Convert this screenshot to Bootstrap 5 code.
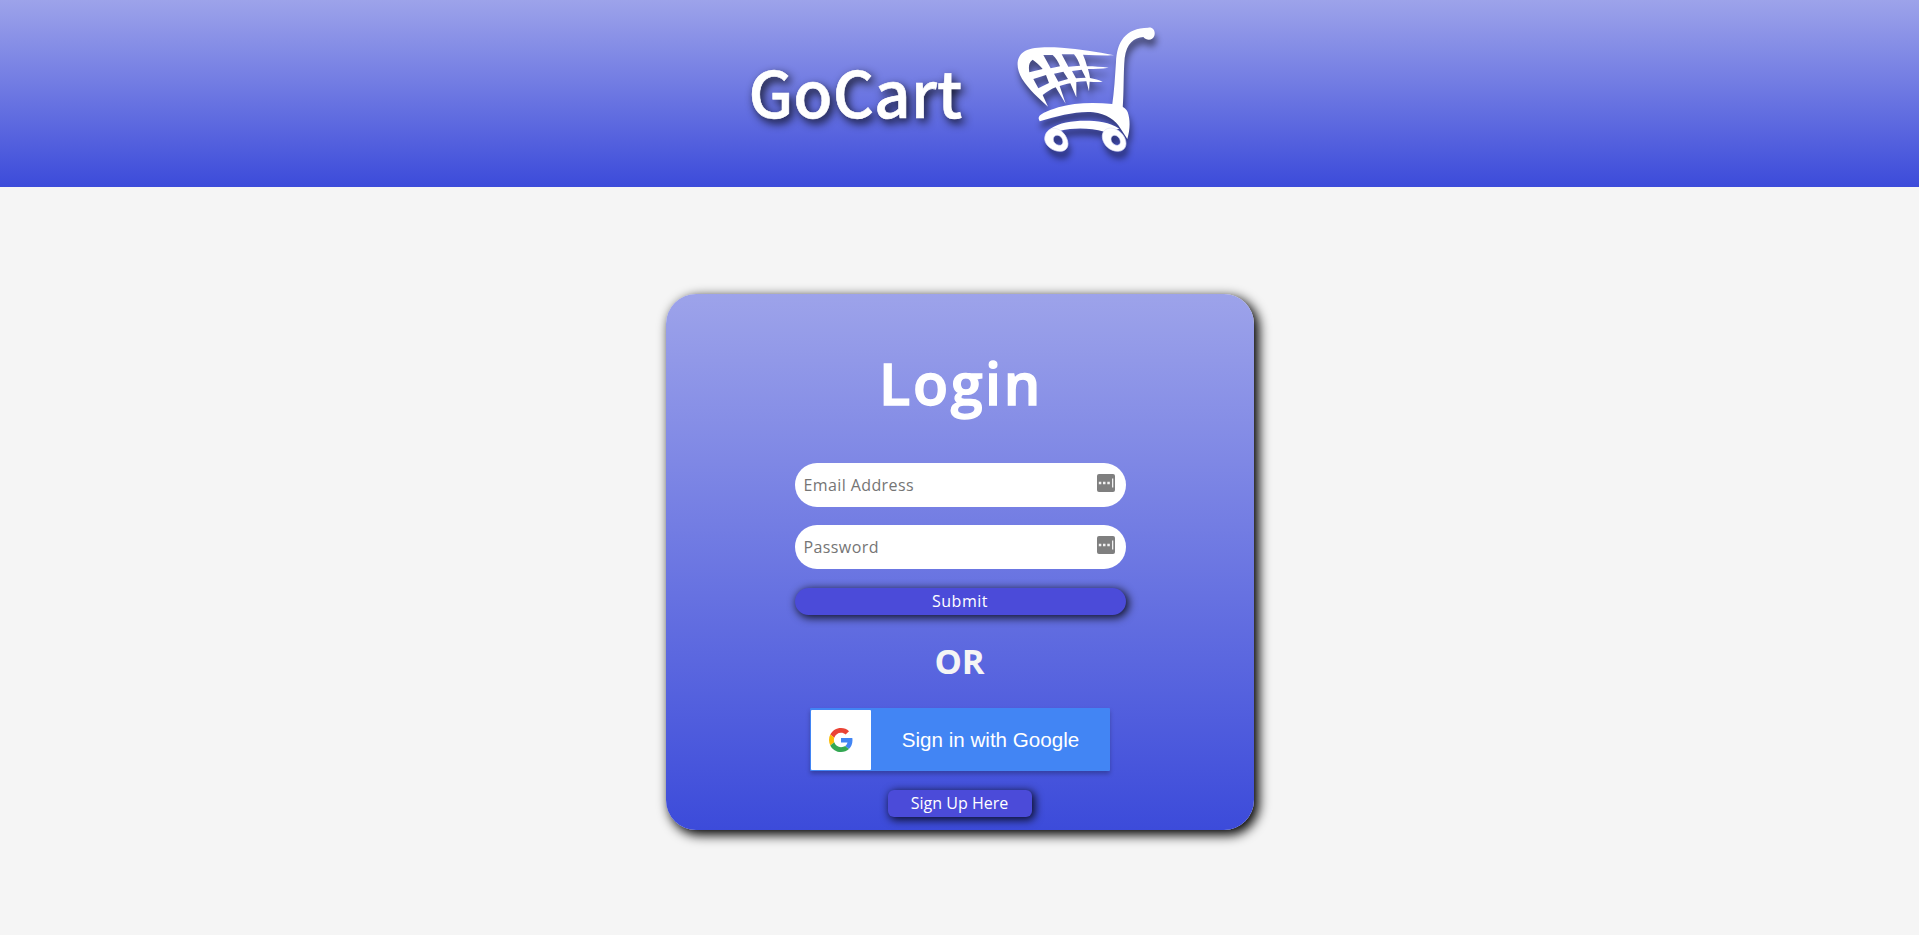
<!DOCTYPE html>
<html lang="en">
<head>
    <meta charset="UTF-8" />
    <meta name="viewport" content="width=device-width, initial-scale=1" />
    <title>GoCart</title>
    <link href="https://cdn.jsdelivr.net/npm/bootstrap@5.3.0/dist/css/bootstrap.min.css" rel="stylesheet" />

    <style>
    body {
        background-color: #f5f5f5;
        font-family: "Open Sans", "Noto Sans", sans-serif;
    }

    .site-header {
        height: 187px;
        background: linear-gradient(#9da3ea, #3c4bda);
    }

    .brand-name {
        font-family: "Noto Sans CJK JP", sans-serif;
        font-size: 64px;
        font-weight: 500;
        line-height: 1;
        text-shadow: 3px 4px 10px rgba(0, 0, 0, 0.9);
        -webkit-text-stroke: 0.6px #fff;
        margin: 0 56px 8px 8px;
        width: 210px;
        white-space: nowrap;
    }

    .brand-cart {
        width: 142px;
        height: 128px;
        overflow: visible;
        margin: 26px 22px 0 0;
        filter: drop-shadow(2px 7px 3px rgba(0, 0, 0, 0.45));
    }

    .login-card {
        width: 588px;
        height: 536px;
        margin-top: 107px;
        padding-top: 50px;
        border-radius: 30px;
        background: linear-gradient(#9da3ea, #3c4bda);
        box-shadow: 4px 4px 12px 1px #000;
    }

    .login-title {
        font-size: 57.5px;
        font-weight: 600;
        line-height: 78px;
        letter-spacing: 2.6px;
        -webkit-text-stroke: 1.4px #fff;
        margin: 0 0 41px 3px;
    }

    .login-form {
        width: 331px;
        margin-left: 1px;
    }

    .login-form .form-control {
        height: 44px;
        padding: 0 40px 1px 9px;
        border: 0;
        border-radius: 22px;
        font-size: 16px;
        letter-spacing: 0.4px;
    }

    .login-form .form-control::placeholder {
        color: #757575;
    }

    .field-gap {
        margin-bottom: 18px;
    }

    .field-icon {
        width: 18px;
        height: 18px;
        top: 11px;
        right: 11px;
    }

    .btn-go {
        height: 27px;
        padding: 0;
        border: 0;
        border-radius: 14px;
        background-color: #4b4bd9;
        color: #fff;
        font-size: 16px;
        font-weight: 500;
        line-height: 27px;
        letter-spacing: 0.2px;
        box-shadow: 2px 2px 8px 1px rgba(0, 0, 0, 0.8);
    }

    .btn-submit {
        margin-top: 1px;
        letter-spacing: 0.5px;
    }

    .btn-signup {
        width: 144px;
        border-radius: 6px;
        margin-top: 19px;
        letter-spacing: 0;
    }

    .or-text {
        color: #f5f5f5;
        font-size: 34.5px;
        font-weight: 700;
        line-height: 48px;
        margin: 22px 0 23px;
    }

    .google-btn {
        width: 300px;
        height: 63px;
        padding: 1px;
        border: 0;
        border-radius: 1px;
        background-color: #4285f4;
        box-shadow: 0 3px 4px rgba(0, 0, 0, 0.25);
        font-family: "Liberation Sans", sans-serif;
        font-size: 20.6px;
    }

    .google-label {
        padding: 2px 0 0 2px;
    }

    .google-logo {
        width: 60px;
        height: 60px;
        border-radius: 1px;
    }
    </style>
</head>
<body class="min-vh-100">
    <header class="site-header d-flex justify-content-center align-items-start text-white">
        <h1 class="brand-name align-self-center">GoCart</h1>
        <svg class="brand-cart" viewBox="45 49 426 384" fill="#fff">
            <!-- handle -->
            <path d="M336 290 C343 245 345 200 348 157 C351 97 375 55 445 54 C460 52 467 65 463 78 C458 93 440 94 430 82 C402 84 380 101 374 145 C370 190 372 245 368 296 Z" />
            <!-- basket -->
            <path fill-rule="evenodd" d="M144 291 C116 265 87 240 66 207 C47 175 47 140 75 124 C99 111 140 112 185 114 C240 118 290 126 342 137 C310 138 280 136 249 135 C255 148 258 159 261 170 C282 170 304 172 326 174 C304 177 283 178 264 178 C267 188 269 197 270 205 C284 208 297 211 308 216 C295 218 282 217 269 216 L267 245 L259 215 C248 215 238 216 229 217 L229 263 L211 221 C199 223 188 226 179 229 L197 282 L167 233 C152 239 140 247 128 256 Z
                M88 188 C85 170 87 157 98 150 C108 157 120 168 128 178 Z
                M130 136 L158 136 C167 144 175 157 180 170 L152 176 Z
                M185 134 L222 134 C230 143 236 156 240 168 L205 171 Z
                M100 208 L138 196 L147 220 L115 236 Z
                M162 192 L190 186 L204 208 L175 216 Z
                M216 184 L245 180 L257 204 L228 206 Z" />
            <!-- base -->
            <path d="M116 327 C114 314 140 305 175 293 C220 279 280 277 337 283 C357 285 375 290 383 307 C391 330 391 358 382 388 L361 356 C347 331 318 313 280 308 C230 304 175 319 119 335 Z" />
            <path d="M151 357 C178 339 215 333 255 333 C290 333 330 337 358 357 L313 366 C270 354 220 354 181 363 Z" />
            <!-- wheels -->
            <path fill-rule="evenodd" stroke="#dfe1f8" stroke-width="2" d="M134 389 C134 370 146 356 163 356 C184 357 203 380 204 402 C204 417 194 425 180 425 C156 425 136 407 134 389 Z M160 387 C158 397 170 408 181 407 C193 404 190 386 179 379 C170 374 161 378 160 387 Z" />
            <path fill-rule="evenodd" stroke="#dfe1f8" stroke-width="2" d="M307 384 C305 367 316 355 333 355 C357 356 378 380 378 401 C378 417 367 425 353 425 C330 425 309 405 307 384 Z M333 387 C332 397 343 408 353 407 C366 404 362 386 351 379 C343 374 334 378 333 387 Z" />
        </svg>
    </header>

    <main class="login-card d-flex flex-column align-items-center mx-auto text-white">
        <h2 class="login-title">Login</h2>

        <form class="login-form d-flex flex-column" novalidate>
            <div class="field-gap position-relative">
                <input type="email" class="form-control" placeholder="Email Address" aria-label="Email Address" />
                <svg class="field-icon position-absolute" viewBox="0 0 18 18">
                    <rect width="18" height="18" rx="2" fill="#7f7f7f" />
                    <path d="M1.8 7.8h2.5v2.5H1.8zM6 7.8h2.5v2.5H6zM10.3 7.8h2.5v2.5h-2.5zM15 4.5h1.3v9H15z" fill="#fff" fill-opacity=".9" />
                </svg>
            </div>
            <div class="field-gap position-relative">
                <input type="password" class="form-control" placeholder="Password" aria-label="Password" />
                <svg class="field-icon position-absolute" viewBox="0 0 18 18">
                    <rect width="18" height="18" rx="2" fill="#7f7f7f" />
                    <path d="M1.8 7.8h2.5v2.5H1.8zM6 7.8h2.5v2.5H6zM10.3 7.8h2.5v2.5h-2.5zM15 4.5h1.3v9H15z" fill="#fff" fill-opacity=".9" />
                </svg>
            </div>
            <button type="submit" class="btn btn-go btn-submit">Submit</button>
        </form>

        <h3 class="or-text">OR</h3>

        <button type="button" class="google-btn d-flex align-items-center text-white">
            <span class="google-logo bg-white d-flex align-items-center justify-content-center">
                <svg width="24" height="24" viewBox="0 0 48 48">
                    <path fill="#EA4335" d="M24 9.5c3.54 0 6.71 1.22 9.21 3.6l6.85-6.85C35.9 2.38 30.47 0 24 0 14.62 0 6.51 5.38 2.56 13.22l7.98 6.19C12.43 13.72 17.74 9.5 24 9.5z" />
                    <path fill="#4285F4" d="M46.98 24.55c0-1.57-.15-3.09-.38-4.55H24v9.02h12.94c-.58 2.96-2.26 5.48-4.78 7.18l7.73 6c4.51-4.18 7.09-10.36 7.09-17.65z" />
                    <path fill="#FBBC05" d="M10.53 28.59c-.48-1.45-.76-2.99-.76-4.59s.27-3.14.76-4.59l-7.98-6.19C.92 16.46 0 20.12 0 24s.92 7.54 2.56 10.78l7.97-6.19z" />
                    <path fill="#34A853" d="M24 48c6.48 0 11.93-2.13 15.89-5.81l-7.73-6c-2.15 1.45-4.92 2.3-8.16 2.3-6.26 0-11.57-4.22-13.47-9.91l-7.98 6.19C6.51 42.62 14.62 48 24 48z" />
                </svg>
            </span>
            <span class="google-label flex-grow-1 text-center">Sign in with Google</span>
        </button>

        <a href="#" class="btn btn-go btn-signup">Sign Up Here</a>
    </main>

    <script src="https://cdn.jsdelivr.net/npm/bootstrap@5.3.0/dist/js/bootstrap.bundle.min.js"></script>
</body>
</html>
